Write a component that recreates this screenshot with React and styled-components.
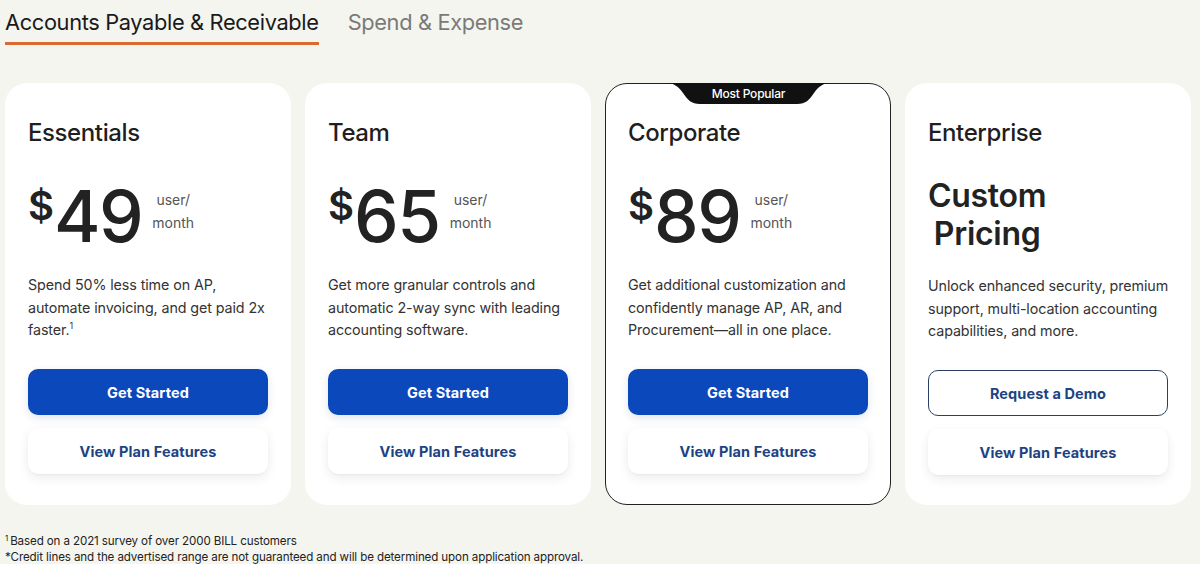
import React from "react";
import styled, { createGlobalStyle } from "styled-components";

const Global = createGlobalStyle`
  html, body { margin: 0; padding: 0; background: #f5f5f0; }
  body { font-family: Inter, "Noto Sans", sans-serif; color: #222; -webkit-font-smoothing: antialiased; }
`;

const Page = styled.div`
  width: 1200px;
  height: 564px;
  padding: 0 0 0 5px;
  box-sizing: border-box;
  overflow: hidden;
`;

const Tabs = styled.div`
  display: flex;
  gap: 29px;
  height: 48px;
  align-items: flex-start;
  padding-top: 7px;
  box-sizing: border-box;
`;

const Tab = styled.div`
  font-size: 21.8px;
  line-height: 30px;
  letter-spacing: -0.35px;
  color: ${(p) => (p.$active ? "#1a1a1a" : "#7a7a7a")};
  padding-bottom: 5px;
  border-bottom: 3px solid ${(p) => (p.$active ? "#d96a30" : "transparent")};
`;

const Grid = styled.div`
  display: grid;
  grid-template-columns: repeat(4, 286px);
  gap: 14px;
  margin-top: 35px;
`;

const Card = styled.div`
  position: relative;
  background: #fff;
  border-radius: 22px;
  border: 1px solid ${(p) => (p.$featured ? "#222" : "transparent")};
  height: 422px;
  box-sizing: border-box;
  padding: 34px 22px 0 22px;
  display: flex;
  flex-direction: column;
`;

const Badge = styled.div`
  position: absolute;
  top: -1px;
  left: 59px;
  width: 167px;
  height: 21px;
  display: flex;
  align-items: center;
  justify-content: center;
  color: #fff;
  font-size: 12px;
  font-weight: 500;
  letter-spacing: -0.2px;
  svg { position: absolute; inset: 0; }
  span { position: relative; }
`;

const Title = styled.h2`
  margin: 0;
  font-size: 24px;
  line-height: 30px;
  font-weight: 500;
  letter-spacing: -0.4px;
  color: #1f1f1f;
`;

const PriceRow = styled.div`
  display: flex;
  align-items: flex-start;
  margin-top: 33px;
  height: 70px;
`;

const Dollar = styled.span`
  font-size: 40px;
  line-height: 40px;
  font-weight: 600;
  margin-top: 5px;
  color: #222;
`;

const Amount = styled.span`
  font-size: 71px;
  line-height: 70px;
  font-weight: 500;
  letter-spacing: -1.5px;
  color: #222;
`;

const Unit = styled.span`
  font-size: 14px;
  line-height: 23px;
  color: #555;
  text-align: center;
  margin: 7px 0 0 10px;
`;

const Custom = styled.div`
  display: inline-block;
  align-self: flex-start;
  text-align: center;
  font-size: 32px;
  line-height: 38px;
  font-weight: 600;
  letter-spacing: -0.3px;
  color: #222;
  margin-top: 29px;
  margin-bottom: -1px;
  height: 76px;
`;

const Desc = styled.p`
  margin: 23px 0 0 0;
  font-size: 14.3px;
  line-height: 22.5px;
  color: #333;
  letter-spacing: -0.1px;
  white-space: nowrap;
  height: 68px;
  sup { font-size: 9px; line-height: 0; vertical-align: 6px; }
`;

const Buttons = styled.div`
  display: flex;
  flex-direction: column;
  gap: 13px;
  margin-top: 27px;
`;

const Button = styled.button`
  height: 46px;
  border-radius: 10px;
  font-family: inherit;
  font-size: 14.5px;
  font-weight: 700;
  letter-spacing: 0.1px;
  cursor: pointer;
  ${(p) =>
    p.$variant === "primary"
      ? `background: #0a48bb; color: #fff; border: none; box-shadow: 0 3px 8px rgba(10,40,100,0.12);`
      : p.$variant === "outline"
      ? `background: #fff; color: #1d4382; border: 1px solid #2a3f66;`
      : `background: #fff; color: #1d4382; border: none; box-shadow: 0 4px 12px rgba(0,0,0,0.08), 0 1px 2px rgba(0,0,0,0.04);`}
`;

const Notes = styled.div`
  margin-top: 28px;
  font-size: 11.6px;
  line-height: 16px;
  color: #222;
  letter-spacing: -0.12px;
  sup { font-size: 8px; vertical-align: 4px; line-height: 0; margin-right: 2px; }
`;

const plans = [
  {
    name: "Essentials",
    price: "49",
    desc: (
      <>
        Spend 50% less time on AP,
        <br />
        automate invoicing, and get paid 2x
        <br />
        faster.<sup>1</sup>
      </>
    ),
    primary: "Get Started",
  },
  {
    name: "Team",
    price: "65",
    desc: (
      <>
        Get more granular controls and
        <br />
        automatic 2-way sync with leading
        <br />
        accounting software.
      </>
    ),
    primary: "Get Started",
  },
  {
    name: "Corporate",
    price: "89",
    featured: true,
    desc: (
      <>
        Get additional customization and
        <br />
        confidently manage AP, AR, and
        <br />
        Procurement—all in one place.
      </>
    ),
    primary: "Get Started",
  },
  {
    name: "Enterprise",
    custom: true,
    desc: (
      <>
        Unlock enhanced security, premium
        <br />
        support, multi-location accounting
        <br />
        capabilities, and more.
      </>
    ),
    primary: "Request a Demo",
  },
];

function BadgeShape() {
  return (
    <svg width="167" height="21" viewBox="0 0 167 21">
      <path
        d="M0 0 H167 C158 0 154 3 149 10 C144 17 141 21 132 21 H35 C26 21 23 17 18 10 C13 3 9 0 0 0 Z"
        fill="#111"
      />
    </svg>
  );
}

export default function App() {
  return (
    <Page>
      <Global />
      <Tabs>
        <Tab $active>Accounts Payable &amp; Receivable</Tab>
        <Tab>Spend &amp; Expense</Tab>
      </Tabs>
      <Grid>
        {plans.map((p) => (
          <Card key={p.name} $featured={p.featured}>
            {p.featured && (
              <Badge>
                <BadgeShape />
                <span>Most Popular</span>
              </Badge>
            )}
            <Title>{p.name}</Title>
            {p.custom ? (
              <Custom>
                Custom
                <br />
                Pricing
              </Custom>
            ) : (
              <PriceRow>
                <Dollar>$</Dollar>
                <Amount>{p.price}</Amount>
                <Unit>
                  user/
                  <br />
                  month
                </Unit>
              </PriceRow>
            )}
            <Desc>{p.desc}</Desc>
            <Buttons>
              <Button $variant={p.custom ? "outline" : "primary"}>{p.primary}</Button>
              <Button $variant="ghost">View Plan Features</Button>
            </Buttons>
          </Card>
        ))}
      </Grid>
      <Notes>
        <div>
          <sup>1</sup>Based on a 2021 survey of over 2000 BILL customers
        </div>
        <div>
          *Credit lines and the advertised range are not guaranteed and will be determined upon application approval.
        </div>
      </Notes>
    </Page>
  );
}
